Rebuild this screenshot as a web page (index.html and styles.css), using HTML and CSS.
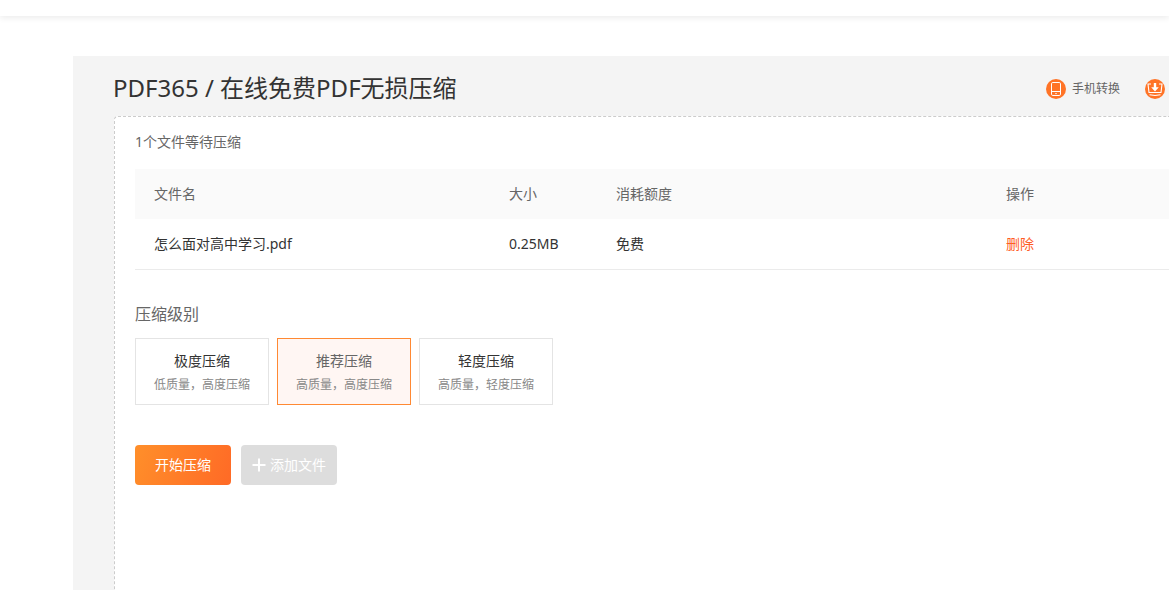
FILE: index.html
```html
<!DOCTYPE html>
<html lang="zh-CN">
<head>
<meta charset="utf-8">
<meta name="viewport" content="width=device-width, initial-scale=1">
<title>PDF365 / 在线免费PDF无损压缩</title>
<link rel="stylesheet" href="styles.css">
</head>
<body>
<header class="topbar"></header>
<main class="workspace">
  <div class="heading">
    <h1 class="title">PDF365 / 在线免费PDF无损压缩</h1>
    <nav class="shortcuts">
      <a class="shortcut" href="#">
        <svg class="shortcut-icon" viewBox="0 0 20 20" aria-hidden="true">
          <circle cx="10" cy="10" r="10" fill="#ff7326"/>
          <rect x="5.5" y="3.5" width="9" height="13" rx="1.3" fill="none" stroke="#fff"/>
          <path d="M5.5 12.5h9M9.3 14.6h1.4" fill="none" stroke="#fff"/>
        </svg>
        <span>手机转换</span>
      </a>
      <a class="shortcut" href="#" aria-label="下载">
        <svg class="shortcut-icon" viewBox="0 0 20 20" aria-hidden="true">
          <circle cx="10" cy="10" r="10" fill="#ff7326"/>
          <path d="M6 5H3l1 8.5h12L17 5h-3M4.5 15.8l5.5.7 5.5-.7" fill="none" stroke="#fff" stroke-width="1.1"/>
          <path d="M10 4v5" stroke="#fff" stroke-width="2.4"/>
          <path d="M6.2 8.2h7.6L10 12.4z" fill="#fff"/>
        </svg>
      </a>
    </nav>
  </div>
  <section class="panel">
    <p class="status">1个文件等待压缩</p>
    <table class="files">
      <colgroup><col class="col-name"><col class="col-size"><col class="col-cost"><col></colgroup>
      <thead>
        <tr><th>文件名</th><th>大小</th><th>消耗额度</th><th>操作</th></tr>
      </thead>
      <tbody>
        <tr><td>怎么面对高中学习.pdf</td><td>0.25MB</td><td>免费</td><td><a class="delete" href="#">删除</a></td></tr>
      </tbody>
    </table>
    <fieldset class="levels">
      <legend class="levels-title">压缩级别</legend>
      <div class="level-list">
        <label class="level"><input class="level-input" type="radio" name="level"><span class="level-name">极度压缩</span><span class="level-note">低质量，高度压缩</span></label>
        <label class="level"><input class="level-input" type="radio" name="level" checked><span class="level-name">推荐压缩</span><span class="level-note">高质量，高度压缩</span></label>
        <label class="level"><input class="level-input" type="radio" name="level"><span class="level-name">轻度压缩</span><span class="level-note">高质量，轻度压缩</span></label>
      </div>
    </fieldset>
    <div class="actions">
      <button class="button button-start" type="button">开始压缩</button>
      <button class="button button-add" type="button">
        <svg class="plus" viewBox="0 0 14 14" aria-hidden="true"><path d="M7 0.5v13M0.5 7h13" stroke="#fff" stroke-width="2"/></svg>
        <span>添加文件</span>
      </button>
    </div>
  </section>
</main>
</body>
</html>
```
FILE: styles.css
```css
* {
  box-sizing: border-box;
}

body {
  display: flex;
  flex-direction: column;
  min-height: 100vh;
  margin: 0;
  background: #fff;
  color: #333;
  font: 14px/20px "Noto Sans", "Noto Sans CJK SC", sans-serif;
}

a {
  color: inherit;
  text-decoration: none;
}

.topbar {
  height: 16px;
  background: #fff;
  box-shadow: 0 2px 6px rgba(0, 0, 0, 0.08);
}

.workspace {
  display: flex;
  flex: 1;
  flex-direction: column;
  margin: 40px 0 0 73px;
  padding-left: 40px;
  background: #f4f4f4;
}

.heading {
  display: flex;
  align-items: flex-end;
  justify-content: space-between;
  padding: 16px 4px 12px 0;
}

.title {
  margin: 0;
  font-size: 24px;
  font-weight: 400;
  line-height: 32px;
}

.shortcuts {
  display: flex;
  gap: 25px;
  padding-bottom: 5px;
}

.shortcut {
  display: flex;
  align-items: center;
  gap: 6px;
  color: #666;
  font-size: 12px;
}

.shortcut-icon {
  width: 20px;
  height: 20px;
}

.panel {
  flex: 1;
  margin-left: 1px;
  padding: 15px 0 20px 20px;
  border: 1px dashed #ccc;
  border-width: 1px 0 0 1px;
  border-radius: 4px 0 0 0;
  background: #fff;
}

.status {
  margin: 0 0 17px;
  color: #666;
}

.files {
  width: 100%;
  table-layout: fixed;
  border-collapse: collapse;
}

.col-name {
  width: 355px;
}

.col-size {
  width: 107px;
}

.col-cost {
  width: 390px;
}

.files th,
.files td {
  height: 50px;
  padding: 0 19px;
  text-align: left;
  font-weight: 400;
}

.files th {
  background: #fafafa;
  color: #666;
}

.files td {
  border-bottom: 1px solid #ebebeb;
}

.files .delete {
  color: #ff5c26;
}

.levels {
  margin: 32px 0 0;
  padding: 0;
  border: 0;
}

.levels-title {
  padding: 0;
  color: #666;
  font-size: 16px;
  line-height: 24px;
}

.level-list {
  display: flex;
  gap: 8px;
  margin-top: 12px;
}

.level {
  position: relative;
  display: flex;
  flex-direction: column;
  align-items: center;
  gap: 4px;
  width: 134px;
  padding: 12px 0 9px;
  border: 1px solid #e4e4e4;
  cursor: pointer;
}

.level-input {
  position: absolute;
  margin: 0;
  opacity: 0;
}

.level-note {
  color: #888;
  font-size: 12px;
}

.level:has(:checked) {
  border-color: #ff8933;
  background: #fff6f3;
}

.level:has(:checked) .level-name {
  color: #666;
}

.actions {
  display: flex;
  gap: 10px;
  margin-top: 40px;
}

.button {
  display: flex;
  align-items: center;
  justify-content: center;
  gap: 4px;
  width: 96px;
  height: 40px;
  padding: 0;
  border: 0;
  border-radius: 4px;
  color: #fff;
  font: inherit;
  cursor: pointer;
}

.button-start {
  background: linear-gradient(110deg, #ff8f2a, #ff6a26);
}

.button-add {
  background: #ddd;
}

.plus {
  width: 14px;
  height: 14px;
}
```
